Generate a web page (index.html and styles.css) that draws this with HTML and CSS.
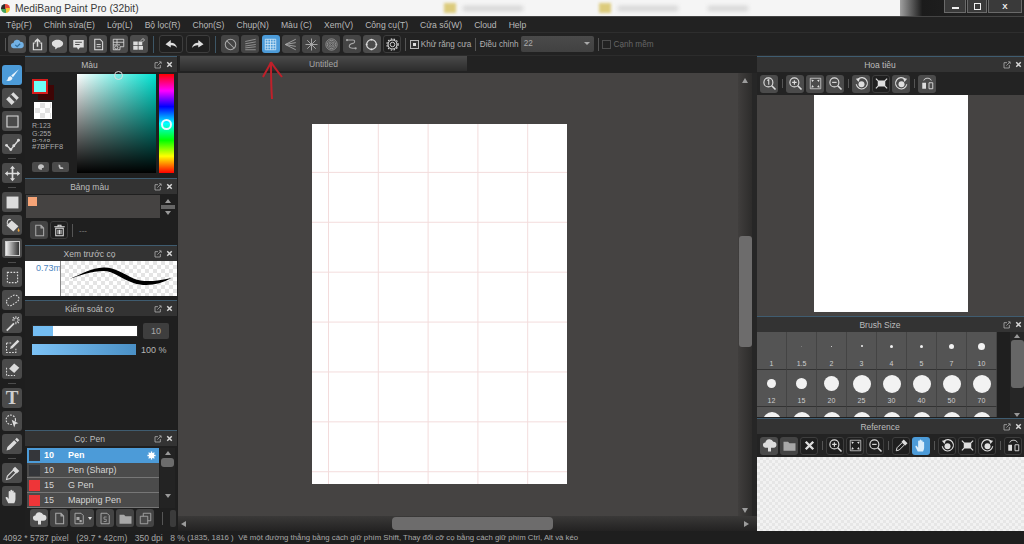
FILE: index.html
```html
<!DOCTYPE html>
<html lang="vi">
<head>
<meta charset="utf-8">
<title>MediBang Paint Pro</title>
<link rel="stylesheet" href="styles.css">
</head>
<body>
<svg class="defs" xmlns="http://www.w3.org/2000/svg">
<defs>
<symbol id="cloud" viewBox="0 0 20 20"><path d="M5 15a3.500 3.500 0 0 1-.5-7A5 5 0 0 1 14 6.500a4.300 4.300 0 0 1 1 8.500z" fill="currentColor"/><path d="M7 10.500l2.500 2.500 4-4" fill="none" stroke="#2f6f9f" stroke-width="1.600"/></symbol>
<symbol id="share" viewBox="0 0 20 20"><path d="M7 8H4.500v9h11V8H13" fill="none" stroke="currentColor" stroke-width="1.500"/><path d="M10 13V3M6.500 6.500L10 3l3.500 3.500" fill="none" stroke="currentColor" stroke-width="2"/></symbol>
<symbol id="bubble" viewBox="0 0 20 20"><path d="M10 3.500c4.500 0 7.500 2.300 7.500 5.200s-3 5.300-7 5.300L7 16.500V13.500C4 12.800 2.500 11 2.500 8.700 2.500 5.800 5.500 3.500 10 3.500z" fill="currentColor"/></symbol>
<symbol id="comment" viewBox="0 0 20 20"><path d="M3 4h14v10h-5l-2.500 3L8 14H3z" fill="currentColor"/><path d="M5.500 7h9M5.500 10h6" stroke="#4a4a4a" stroke-width="1.300"/></symbol>
<symbol id="page" viewBox="0 0 20 20"><path d="M5 3h7l3.500 3.500V17H5z" fill="none" stroke="currentColor" stroke-width="1.400"/><path d="M7.500 10h5.500M7.500 13h5.500" stroke="currentColor" stroke-width="1.200"/></symbol>
<symbol id="blank" viewBox="0 0 20 20"><path d="M5 3h7l3.500 3.500V17H5zM12 3v3.500h3.500" fill="none" stroke="currentColor" stroke-width="1.400"/></symbol>
<symbol id="sheet" viewBox="0 0 20 20"><path d="M3 3h14v10h-5v4H3zM3 7h14M3 10.500h9M8 3v7" fill="none" stroke="currentColor" stroke-width="1.100"/><circle cx="7" cy="14" r="2.200" fill="none" stroke="currentColor"/></symbol>
<symbol id="panes" viewBox="0 0 20 20"><path d="M3 6h6v5H3zM3 12h6v5H3zM10 12h6v5h-6zM10 6h5v5h-5z" fill="currentColor"/><path d="M13 5l3-3 2 2-3 3" fill="none" stroke="currentColor"/></symbol>
<symbol id="undo" viewBox="0 0 20 20"><path d="M9 4L2 9.500 9 14v-3c3.500-.3 6 .7 8.500 3.500C16.500 10 13.500 7.500 9 7.500z" fill="currentColor"/></symbol>
<symbol id="redo" viewBox="0 0 20 20"><path d="M11 4l7 5.500-7 4.500v-3c-3.500-.3-6 .7-8.500 3.500C3.500 10 6.500 7.500 11 7.500z" fill="currentColor"/></symbol>
<symbol id="no" viewBox="0 0 20 20"><circle cx="10" cy="10" r="7" fill="none" stroke="currentColor" stroke-width="1.400"/><path d="M5 5l10 10" stroke="currentColor" stroke-width="1.400"/></symbol>
<symbol id="lines" viewBox="0 0 20 20"><path d="M3 6l14-3M3 9l14-2.500M3 12l14-2M3 14.500l14-1.500M3 17h14" stroke="currentColor" fill="none"/></symbol>
<symbol id="grid" viewBox="0 0 20 20"><path d="M3 3h14v14H3zM3 6.500h14M3 10h14M3 13.500h14M6.500 3v14M10 3v14M13.500 3v14" stroke="currentColor" fill="none"/></symbol>
<symbol id="persp" viewBox="0 0 20 20"><path d="M3 10l14-7M3 10l14-2.500M3 10l14 2.500M3 10l14 7" stroke="currentColor" stroke-width="1.200" fill="none"/></symbol>
<symbol id="radial" viewBox="0 0 20 20"><path d="M10 2v16M2 10h16M4.300 4.300l11.400 11.400M15.700 4.300L4.300 15.700" stroke="currentColor" stroke-width="1.300"/></symbol>
<symbol id="gearsolid" viewBox="0 0 20 20"><path d="M10 1v18M1 10h18M3.600 3.600l12.800 12.800M16.400 3.600L3.600 16.400" stroke="currentColor" stroke-width="3"/><circle cx="10" cy="10" r="6" fill="currentColor"/></symbol>
<symbol id="rings" viewBox="0 0 20 20"><g fill="none" stroke="currentColor"><circle cx="10" cy="10" r="7.500"/><circle cx="10" cy="10" r="5.500"/><circle cx="10" cy="10" r="3.500"/><circle cx="10" cy="10" r="1.500"/></g></symbol>
<symbol id="curve" viewBox="0 0 20 20"><path d="M4 4h8c3 0 3 4 0 4.500S7 10 7 12.500 11 15 15 15" fill="none" stroke="currentColor" stroke-width="1.400"/><circle cx="4" cy="4" r="1.500" fill="currentColor"/><circle cx="15.500" cy="15" r="1.500" fill="currentColor"/></symbol>
<symbol id="circle" viewBox="0 0 20 20"><circle cx="10" cy="10" r="6.500" fill="none" stroke="currentColor" stroke-width="1.500"/><g fill="currentColor"><circle cx="10" cy="3.500" r="1.300"/><circle cx="10" cy="16.500" r="1.300"/><circle cx="3.500" cy="10" r="1.300"/><circle cx="16.500" cy="10" r="1.300"/></g></symbol>
<symbol id="gear" viewBox="0 0 20 20"><circle cx="10" cy="10" r="3" fill="none" stroke="currentColor" stroke-width="1.200"/><circle cx="10" cy="10" r="6" fill="none" stroke="currentColor" stroke-width="1.500"/><circle cx="10" cy="10" r="7.500" fill="none" stroke="currentColor" stroke-width="1.400" stroke-dasharray="2 2"/></symbol>
<symbol id="brush" viewBox="0 0 20 20"><path d="M17.500 2.500L8.500 10l2 2z" fill="currentColor"/><path d="M8 11c-2.500 0-3 1.500-3.500 3-.3 1-1 1.500-2 2 3 .8 7 .5 7.500-3z" fill="currentColor"/></symbol>
<symbol id="eraser" viewBox="0 0 20 20"><path d="M2.500 11L11 2.500l6.500 6.500L9 17.500z" fill="currentColor"/><path d="M6 7.500L12.500 14l2.300-2.300L8.300 5.200z" fill="#4a4a4a"/></symbol>
<symbol id="rect" viewBox="0 0 20 20"><path d="M3.500 3.500h13v13h-13z" fill="none" stroke="currentColor" stroke-width="1.300"/></symbol>
<symbol id="polyline" viewBox="0 0 20 20"><path d="M3 11l5 5 9-11" fill="none" stroke="currentColor" stroke-width="1.600"/><circle cx="3" cy="11" r="1.700" fill="currentColor"/><circle cx="8" cy="16" r="1.700" fill="currentColor"/><circle cx="11.500" cy="11.500" r="1.700" fill="currentColor"/><circle cx="17" cy="5" r="1.700" fill="currentColor"/></symbol>
<symbol id="move" viewBox="0 0 20 20"><path d="M10 1l3 3.500h-2V9h4.500V7l3.500 3-3.500 3v-2H11v4.500h2L10 19l-3-3.500h2V11H4.500v2L1 10l3.500-3v2H9V4.500H7z" fill="currentColor"/></symbol>
<symbol id="solid" viewBox="0 0 20 20"><path d="M3 3h14v14H3z" fill="currentColor"/></symbol>
<symbol id="bucket" viewBox="0 0 20 20"><path d="M3 10l6-6 8 7-6 6z" fill="currentColor"/><path d="M4 9C3 5 5 2 8 3" fill="none" stroke="currentColor" stroke-width="1.300"/><path d="M17 13c1 2 2 3 1 4s-2 0-2-1 .5-2 1-3z" fill="#e9a23b"/></symbol>
<symbol id="select" viewBox="0 0 20 20"><path d="M4 4h12v12H4z" fill="none" stroke="currentColor" stroke-width="1.300" stroke-dasharray="2 1.600"/></symbol>
<symbol id="lasso" viewBox="0 0 20 20"><path d="M3 11c0-3 4-4 6-6s6-2 8 1-1 5-4 7-5 4-7 3-3-2-3-5z" fill="none" stroke="currentColor" stroke-width="1.200" stroke-dasharray="2 1.500"/></symbol>
<symbol id="wand" viewBox="0 0 20 20"><path d="M2.500 17.500L11 9l1.500 1.500L4 19z" fill="currentColor"/><path d="M14 1.500v3M14 8v3M9.500 6h3M15.500 6h3M10.500 2.500l2 2M17.500 2.500l-2 2M17.500 9.500l-2-2" stroke="currentColor" stroke-width="1.200"/></symbol>
<symbol id="selpen" viewBox="0 0 20 20"><path d="M3 6h6M3 6v11h11v-6" fill="none" stroke="currentColor" stroke-width="1.200" stroke-dasharray="2 1.500"/><path d="M7 13l1-3 8-8 2 2-8 8z" fill="currentColor"/></symbol>
<symbol id="selerase" viewBox="0 0 20 20"><path d="M3 8v9h10" fill="none" stroke="currentColor" stroke-width="1.200" stroke-dasharray="2 1.500"/><path d="M6 9l6-6 6 5-6 6z" fill="currentColor"/></symbol>
<symbol id="selarrow" viewBox="0 0 20 20"><circle cx="8" cy="8" r="5.500" fill="none" stroke="currentColor" stroke-width="1.300" stroke-dasharray="2 1.500"/><path d="M9 8l8 4-3.500 1L12 17z" fill="currentColor"/></symbol>
<symbol id="pen" viewBox="0 0 20 20"><path d="M3 17l1-4 8-8 3 3-8 8zM13 4l2-2 3 3-2 2z" fill="currentColor"/></symbol>
<symbol id="picker" viewBox="0 0 20 20"><path d="M3 17l1-4 7-7 3 3-7 7z" fill="none" stroke="currentColor" stroke-width="1.300"/><path d="M10 5l3-3 5 5-3 3z" fill="currentColor"/></symbol>
<symbol id="hand" viewBox="0 0 20 20"><path d="M5 18l-3-6c-.5-1.500 1-2 2-1l1.500 2V4.500c0-1.400 2-1.400 2 0V9V3c0-1.400 2-1.400 2 0v6V4c0-1.400 2-1.400 2 0v6V6c0-1.400 2-1.400 2 0v7c0 2-1 4-1.500 5z" fill="currentColor"/></symbol>
<symbol id="palette" viewBox="0 0 20 20"><path d="M10 3c4.500 0 7.500 3 7.500 6.500 0 3-2.500 3-4 2.800-1.500 0-1.500 1.500-1 2.500.5 1.500-1 2.200-2.500 2.200C5.500 17 2.500 14 2.500 10S5.500 3 10 3z" fill="currentColor"/></symbol>
<symbol id="droplet" viewBox="0 0 20 20"><path d="M4 4l4 1 1 5 6 1 1 4H7L4 9z" fill="currentColor"/></symbol>
<symbol id="trash" viewBox="0 0 20 20"><path d="M3 5h14M8 5V3h4v2M5 7h10v10H5zM8 9v6M10 9v6M12 9v6" fill="none" stroke="currentColor" stroke-width="1.400"/></symbol>
<symbol id="upcloud" viewBox="0 0 20 20"><path d="M5 13a3.500 3.500 0 0 1-.5-7A5.500 5.500 0 0 1 15 5a4 4 0 0 1 .5 8H12v5H8v-5z" fill="currentColor"/></symbol>
<symbol id="paste" viewBox="0 0 20 20"><path d="M4 3h8l3 3v11H4z" fill="none" stroke="currentColor" stroke-width="1.300"/><path d="M6 8h4v4H6zM10 12h3v3h-3z" fill="currentColor"/></symbol>
<symbol id="docs" viewBox="0 0 20 20"><path d="M4 3h8l3 3v11H4z" fill="none" stroke="currentColor" stroke-width="1.300"/><path d="M11.500 8H8v3h3v3H7.500" fill="none" stroke="currentColor"/></symbol>
<symbol id="folder" viewBox="0 0 20 20"><path d="M2 5h6l2 2h8v10H2z" fill="currentColor"/></symbol>
<symbol id="copy" viewBox="0 0 20 20"><path d="M7 3h10v10H7z" fill="none" stroke="currentColor" stroke-width="1.200"/><path d="M3 7h10v10H3z" fill="#4a4a4a" stroke="currentColor" stroke-width="1.200"/></symbol>
<symbol id="zoom1" viewBox="0 0 20 20"><circle cx="8.500" cy="8.500" r="6" fill="none" stroke="currentColor" stroke-width="1.500"/><path d="M13 13l5 5" stroke="currentColor" stroke-width="2.200"/><path d="M7 6l2-1.200v7" fill="none" stroke="currentColor" stroke-width="1.400"/></symbol>
<symbol id="zoomin" viewBox="0 0 20 20"><circle cx="8.500" cy="8.500" r="6" fill="none" stroke="currentColor" stroke-width="1.500"/><path d="M13 13l5 5" stroke="currentColor" stroke-width="2.200"/><path d="M5.500 8.500h6M8.500 5.500v6" stroke="currentColor" stroke-width="1.500"/></symbol>
<symbol id="zoomout" viewBox="0 0 20 20"><circle cx="8.500" cy="8.500" r="6" fill="none" stroke="currentColor" stroke-width="1.500"/><path d="M13 13l5 5" stroke="currentColor" stroke-width="2.200"/><path d="M5.500 8.500h6" stroke="currentColor" stroke-width="1.500"/></symbol>
<symbol id="fit" viewBox="0 0 20 20"><path d="M3 3h14v14H3z" fill="none" stroke="currentColor"/><path d="M4.500 4.500l3.500 1-2.500 2.500zM15.500 4.500l-1 3.500L12 5.500zM4.500 15.500l1-3.500 2.500 2.500zM15.500 15.500L12 14.500l2.500-2.500z" fill="currentColor"/></symbol>
<symbol id="frame" viewBox="0 0 20 20"><path d="M5 6h10v8H5z" fill="currentColor"/><path d="M2.500 3.500l3 3M17.500 3.500l-3 3M2.500 16.500l3-3M17.500 16.500l-3-3" stroke="currentColor" stroke-width="1.500"/></symbol>
<symbol id="rotl" viewBox="0 0 20 20"><path d="M5 4.500A7.500 7.500 0 1 1 3 11" fill="none" stroke="currentColor" stroke-width="1.500"/><path d="M2.500 3.500L8 3 6 8z" fill="currentColor"/><circle cx="10" cy="11" r="4" fill="currentColor"/></symbol>
<symbol id="rotr" viewBox="0 0 20 20"><path d="M15 4.500A7.500 7.500 0 1 0 17 11" fill="none" stroke="currentColor" stroke-width="1.500"/><path d="M17.500 3.500L12 3l2 5z" fill="currentColor"/><circle cx="10" cy="11" r="4" fill="currentColor"/></symbol>
<symbol id="flip" viewBox="0 0 20 20"><path d="M3 9h5v8H3z" fill="currentColor"/><path d="M12 9h5v8h-5z" fill="none" stroke="currentColor" stroke-width="1.200"/><path d="M5 6c1-4 9-4 10 0" fill="none" stroke="currentColor" stroke-width="1.300"/></symbol>
<symbol id="cross" viewBox="0 0 20 20"><path d="M5 5l10 10M15 5L5 15" stroke="currentColor" stroke-width="3.200"/></symbol>
<symbol id="pop" viewBox="0 0 12 12"><path d="M6 2.500H1.500v8h8V6" fill="none" stroke="currentColor" stroke-width="1.100"/><path d="M5 7l5.500-5.500M7.500 1.200h3.300v3.300" fill="none" stroke="currentColor" stroke-width="1"/></symbol>
</defs>
</svg>

<div class="app">
  <header class="titlebar">
    <span class="app-logo"></span>
    <span class="app-name">MediBang Paint Pro (32bit)</span>
    <div class="tabs-behind">
      <span class="ghost-folder"></span><span class="ghost-text ghost-b"></span>
      <span class="ghost-folder"></span><span class="ghost-text ghost-c"></span>
      <span class="ghost-text ghost-d"></span>
    </div>
    <div class="win-area">
      <span class="win-btn win-min"><i class="win-min-bar"></i></span>
      <span class="win-btn win-max"><i class="win-max-box"></i></span>
      <span class="win-btn win-close">X</span>
    </div>
  </header>

  <nav class="menubar">
    <span>Tệp(F)</span><span>Chỉnh sửa(E)</span><span>Lớp(L)</span><span>Bộ lọc(R)</span><span>Chọn(S)</span><span>Chụp(N)</span><span>Màu (C)</span><span>Xem(V)</span><span>Công cụ(T)</span><span>Cửa sổ(W)</span><span>Cloud</span><span>Help</span>
  </nav>

  <div class="toolbar">
    <span class="tsep tsep-first"></span>
    <span class="btn btn-cloud"><svg><use href="#cloud"/></svg></span>
    <span class="btn"><svg><use href="#share"/></svg></span>
    <span class="btn"><svg><use href="#bubble"/></svg></span>
    <span class="btn"><svg><use href="#comment"/></svg></span>
    <span class="btn"><svg><use href="#page"/></svg></span>
    <span class="btn"><svg><use href="#sheet"/></svg></span>
    <span class="btn"><svg><use href="#panes"/></svg></span>
    <span class="tsep tsep-blue"></span>
    <span class="btn btn-wide btn-dark"><svg><use href="#undo"/></svg></span>
    <span class="btn btn-wide btn-dark"><svg><use href="#redo"/></svg></span>
    <span class="tsep tsep-blue"></span>
    <span class="btn btn-dim"><svg><use href="#no"/></svg></span>
    <span class="btn btn-dim"><svg><use href="#lines"/></svg></span>
    <span class="btn btn-on"><svg><use href="#grid"/></svg></span>
    <span class="btn btn-dim"><svg><use href="#persp"/></svg></span>
    <span class="btn btn-dim"><svg><use href="#radial"/></svg></span>
    <span class="btn btn-dim"><svg><use href="#rings"/></svg></span>
    <span class="btn btn-dim"><svg><use href="#curve"/></svg></span>
    <span class="btn"><svg><use href="#circle"/></svg></span>
    <span class="btn btn-dark"><svg><use href="#gear"/></svg></span>
    <span class="tsep"></span>
    <span class="check check-on"></span>
    <span class="tb-label">Khử răng cưa</span>
    <span class="tsep"></span>
    <span class="tb-label">Điều chỉnh</span>
    <span class="combo">22</span>
    <span class="tsep"></span>
    <span class="check"></span>
    <span class="tb-label tb-label-off">Cạnh mềm</span>
  </div>

  <main class="workspace">
    <aside class="tools">
      <span class="tool tool-on"><svg><use href="#brush"/></svg></span>
      <span class="tool"><svg><use href="#eraser"/></svg></span>
      <span class="tool"><svg><use href="#rect"/></svg></span>
      <span class="tool"><svg><use href="#polyline"/></svg></span>
      <span class="tool-sep"></span>
      <span class="tool"><svg><use href="#move"/></svg></span>
      <span class="tool-sep"></span>
      <span class="tool"><svg><use href="#solid"/></svg></span>
      <span class="tool"><svg><use href="#bucket"/></svg></span>
      <span class="tool"><i class="tool-gradient"></i></span>
      <span class="tool-sep"></span>
      <span class="tool"><svg><use href="#select"/></svg></span>
      <span class="tool"><svg><use href="#lasso"/></svg></span>
      <span class="tool"><svg><use href="#wand"/></svg></span>
      <span class="tool"><svg><use href="#selpen"/></svg></span>
      <span class="tool"><svg><use href="#selerase"/></svg></span>
      <span class="tool-sep"></span>
      <span class="tool tool-text">T</span>
      <span class="tool"><svg><use href="#selarrow"/></svg></span>
      <span class="tool"><svg><use href="#pen"/></svg></span>
      <span class="tool-sep"></span>
      <span class="tool"><svg><use href="#picker"/></svg></span>
      <span class="tool"><svg><use href="#hand"/></svg></span>
    </aside>

    <div class="left-panels">
      <section class="panel panel-color">
        <div class="phead"><span class="ptitle">Màu</span><svg class="pop"><use href="#pop"/></svg><svg class="close"><use href="#cross"/></svg></div>
        <div class="color-body">
          <div class="color-info">
            <div class="swatches"><i class="swatch-back"></i><i class="swatch-front"></i></div>
            <i class="swatch-clear"></i>
            <div class="rgb"><span>R:123</span><span>G:255</span><span class="rgb-cut">B:248</span><span class="rgb-hex">#7BFFF8</span></div>
            <div class="color-btns"><span class="mini"><svg><use href="#palette"/></svg></span><span class="mini"><svg><use href="#droplet"/></svg></span></div>
          </div>
          <div class="sv"><i class="sv-ring"></i></div>
          <div class="hue"><i class="hue-ring"></i></div>
        </div>
      </section>

      <section class="panel panel-palette">
        <div class="phead"><span class="ptitle">Bảng màu</span><svg class="pop"><use href="#pop"/></svg><svg class="close"><use href="#cross"/></svg></div>
        <div class="pal-list"><div class="pal-cells"><i class="pal-chip"></i></div><div class="pal-scroll"><i class="arr-up"></i><i class="pal-thumb"></i><i class="arr-down"></i></div></div>
        <div class="pal-foot"><span class="btn btn-dim"><svg><use href="#blank"/></svg></span><span class="btn btn-dark"><svg><use href="#trash"/></svg></span><span class="tsep"></span><span class="pal-name">---</span></div>
      </section>

      <section class="panel panel-preview">
        <div class="phead"><span class="ptitle">Xem trước cọ</span><svg class="pop"><use href="#pop"/></svg><svg class="close"><use href="#cross"/></svg></div>
        <div class="preview">
          <div class="preview-size">0.73m</div>
          <div class="preview-stroke"><svg viewBox="0 0 115 35"><path d="M8 18C20 13 30 7 42 6.500c10-.5 20 6 30 11 10 4 22 3 38-.5-12 7-26 9-38 5C60 18 52 10 42 10 30 10 20 14 8 18z" fill="#000"/></svg></div>
        </div>
      </section>

      <section class="panel panel-control">
        <div class="phead"><span class="ptitle">Kiểm soát cọ</span><svg class="pop"><use href="#pop"/></svg><svg class="close"><use href="#cross"/></svg></div>
        <div class="ctl-row ctl-row-a"><div class="slider"><i class="slider-fill"></i></div><span class="ctl-input">10</span></div>
        <div class="ctl-row"><div class="slider2"></div><span class="ctl-pct">100 %</span></div>
      </section>

      <section class="panel panel-brush">
        <div class="phead"><span class="ptitle">Cọ: Pen</span><svg class="pop"><use href="#pop"/></svg><svg class="close"><use href="#cross"/></svg></div>
        <div class="brush-main">
          <div class="brush-list">
            <div class="brow brow-on"><i class="chip chip-dark"></i><b class="bsize">10</b><b class="bname">Pen</b><svg class="bgear"><use href="#gearsolid"/></svg></div>
            <div class="brow"><i class="chip chip-dark"></i><span class="bsize">10</span><span class="bname">Pen (Sharp)</span></div>
            <div class="brow"><i class="chip chip-red"></i><span class="bsize">15</span><span class="bname">G Pen</span></div>
            <div class="brow"><i class="chip chip-red"></i><span class="bsize">15</span><span class="bname">Mapping Pen</span></div>
          </div>
          <div class="brush-scroll"><i class="arr-up"></i><i class="brush-thumb"></i><i class="arr-down"></i></div>
        </div>
        <div class="brush-foot">
          <span class="btn"><svg><use href="#upcloud"/></svg></span>
          <span class="btn btn-dim"><svg><use href="#blank"/></svg></span>
          <span class="btn btn-wide btn-dim"><svg><use href="#paste"/></svg><i class="caret"></i></span>
          <span class="btn btn-dim"><svg><use href="#docs"/></svg></span>
          <span class="btn btn-dim"><svg><use href="#folder"/></svg></span>
          <span class="btn btn-dim"><svg><use href="#copy"/></svg></span>
          <span class="tsep foot-sep"></span>
          <span class="foot-stub"></span>
        </div>
      </section>
    </div>

    <div class="center">
      <div class="tabbar"><div class="tab">Untitled</div></div>
      <div class="canvas-row">
        <div class="canvas"><div class="paper"></div></div>
        <div class="vscroll"><i class="v-up"></i><i class="v-thumb"></i><i class="v-down"></i></div>
        <div class="center-gutter"></div>
      </div>
      <div class="hscroll"><i class="h-left"></i><i class="h-thumb"></i><i class="h-right"></i></div>
    </div>

    <div class="right-panels">
      <section class="panel panel-nav">
        <div class="phead"><span class="ptitle">Hoa tiêu</span><svg class="pop"><use href="#pop"/></svg><svg class="close"><use href="#cross"/></svg></div>
        <div class="rbar">
          <span class="btn"><svg><use href="#zoom1"/></svg></span><span class="rsep"></span>
          <span class="btn"><svg><use href="#zoomin"/></svg></span><span class="btn"><svg><use href="#fit"/></svg></span><span class="btn"><svg><use href="#zoomout"/></svg></span><span class="rsep"></span>
          <span class="btn"><svg><use href="#rotl"/></svg></span><span class="btn btn-dark"><svg><use href="#frame"/></svg></span><span class="btn"><svg><use href="#rotr"/></svg></span><span class="rsep"></span>
          <span class="btn"><svg><use href="#flip"/></svg></span>
        </div>
        <div class="nav-view"><div class="nav-paper"></div></div>
      </section>

      <section class="panel panel-size">
        <div class="phead"><span class="ptitle">Brush Size</span><svg class="pop"><use href="#pop"/></svg><svg class="close"><use href="#cross"/></svg></div>
        <div class="size-main">
          <div class="size-grid">
            <div class="cell"><span class="dotbox"></span><span class="clabel">1</span></div>
            <div class="cell"><span class="dotbox"><i class="dot dot-faint" style="width:1px;height:1px"></i></span><span class="clabel">1.5</span></div>
            <div class="cell"><span class="dotbox"><i class="dot" style="width:1px;height:1px"></i></span><span class="clabel">2</span></div>
            <div class="cell"><span class="dotbox"><i class="dot" style="width:2px;height:2px"></i></span><span class="clabel">3</span></div>
            <div class="cell"><span class="dotbox"><i class="dot" style="width:3px;height:3px"></i></span><span class="clabel">4</span></div>
            <div class="cell"><span class="dotbox"><i class="dot" style="width:3px;height:3px"></i></span><span class="clabel">5</span></div>
            <div class="cell"><span class="dotbox"><i class="dot" style="width:5px;height:5px"></i></span><span class="clabel">7</span></div>
            <div class="cell"><span class="dotbox"><i class="dot" style="width:7px;height:7px"></i></span><span class="clabel">10</span></div>
            <div class="cell"><span class="dotbox"><i class="dot" style="width:9px;height:9px"></i></span><span class="clabel">12</span></div>
            <div class="cell"><span class="dotbox"><i class="dot" style="width:11px;height:11px"></i></span><span class="clabel">15</span></div>
            <div class="cell"><span class="dotbox"><i class="dot" style="width:15px;height:15px"></i></span><span class="clabel">20</span></div>
            <div class="cell"><span class="dotbox"><i class="dot" style="width:18px;height:18px"></i></span><span class="clabel">25</span></div>
            <div class="cell"><span class="dotbox"><i class="dot" style="width:18px;height:18px"></i></span><span class="clabel">30</span></div>
            <div class="cell"><span class="dotbox"><i class="dot" style="width:18px;height:18px"></i></span><span class="clabel">40</span></div>
            <div class="cell"><span class="dotbox"><i class="dot" style="width:18px;height:18px"></i></span><span class="clabel">50</span></div>
            <div class="cell"><span class="dotbox"><i class="dot" style="width:18px;height:18px"></i></span><span class="clabel">70</span></div>
            <div class="cell"><span class="dotbox"><i class="dot" style="width:18px;height:18px"></i></span><span class="clabel"></span></div>
            <div class="cell"><span class="dotbox"><i class="dot" style="width:18px;height:18px"></i></span><span class="clabel"></span></div>
            <div class="cell"><span class="dotbox"><i class="dot" style="width:18px;height:18px"></i></span><span class="clabel"></span></div>
            <div class="cell"><span class="dotbox"><i class="dot" style="width:18px;height:18px"></i></span><span class="clabel"></span></div>
            <div class="cell"><span class="dotbox"><i class="dot" style="width:18px;height:18px"></i></span><span class="clabel"></span></div>
            <div class="cell"><span class="dotbox"><i class="dot" style="width:18px;height:18px"></i></span><span class="clabel"></span></div>
            <div class="cell"><span class="dotbox"><i class="dot" style="width:18px;height:18px"></i></span><span class="clabel"></span></div>
            <div class="cell"><span class="dotbox"><i class="dot" style="width:18px;height:18px"></i></span><span class="clabel"></span></div>
          </div>
          <div class="size-scroll"><i class="arr-up"></i><i class="size-thumb"></i><i class="arr-down"></i></div>
        </div>
      </section>

      <section class="panel panel-ref">
        <div class="phead"><span class="ptitle">Reference</span><svg class="pop"><use href="#pop"/></svg><svg class="close"><use href="#cross"/></svg></div>
        <div class="rbar rbar-ref">
          <span class="btn"><svg><use href="#upcloud"/></svg></span><span class="btn btn-dim"><svg><use href="#folder"/></svg></span><span class="btn btn-dark"><svg><use href="#cross"/></svg></span><span class="rsep"></span>
          <span class="btn btn-dark"><svg><use href="#zoomin"/></svg></span><span class="btn btn-dark"><svg><use href="#fit"/></svg></span><span class="btn btn-dark"><svg><use href="#zoomout"/></svg></span><span class="rsep"></span>
          <span class="btn btn-dark"><svg><use href="#picker"/></svg></span><span class="btn btn-on"><svg><use href="#hand"/></svg></span><span class="rsep"></span>
          <span class="btn btn-dark"><svg><use href="#rotl"/></svg></span><span class="btn btn-dark"><svg><use href="#frame"/></svg></span><span class="btn btn-dark"><svg><use href="#rotr"/></svg></span><span class="rsep"></span>
          <span class="btn btn-dark"><svg><use href="#flip"/></svg></span>
        </div>
        <div class="ref-view"></div>
      </section>
    </div>
  </main>

  <footer class="status">
    <span>4092 * 5787 pixel</span><span>(29.7 * 42cm)</span><span>350 dpi</span><span>8 %</span><span class="status-coord">(1835, 1816 )</span><span class="status-hint">Vẽ một đường thẳng bằng cách giữ phím Shift, Thay đổi cỡ cọ bằng cách giữ phím Ctrl, Alt và kéo</span>
  </footer>

  <svg class="annotation" viewBox="0 0 24 44"><path d="M10 2C10 14 10 26 11 39M10 2C8 7 5 11 2 17M10 2c3 5 7 10 11 15" fill="none" stroke="#c0202a" stroke-width="2"/></svg>
</div>
</body>
</html>
```

FILE: styles.css
```css
* { box-sizing: border-box; }
html, body { margin: 0; height: 100%; overflow: hidden; }
body { font-family: "Liberation Sans", Arial, sans-serif; background: #1f1f1f; color: #c4c4c4; }
.defs { position: absolute; width: 0; height: 0; }
i { display: block; }
svg { display: block; }

.app { position: relative; width: 1024px; height: 544px; display: flex; flex-direction: column; overflow: hidden; }

/* title bar */
.titlebar { height: 16px; flex: none; display: flex; align-items: center; background: #f5f5f5; color: #3a3a3a; font-size: 10.300px; }
.app-logo { width: 9px; height: 9px; margin-left: 1px; border-radius: 50%; background: conic-gradient(#e5493a 0 25%, #f2c230 25% 50%, #46a35a 50% 75%, #2b2b2b 75%); }
.app-name { margin-left: 5px; white-space: nowrap; }
.tabs-behind { flex: 1; display: flex; align-items: center; padding-left: 305px; }
.ghost-text { height: 5px; background: #d4d4d4; filter: blur(2px); }
.ghost-b { width: 60px; margin-left: 7px; margin-right: 76px; }
.ghost-c { width: 60px; margin-left: 7px; margin-right: 30px; }
.ghost-d { width: 40px; }
.ghost-folder { width: 12px; height: 10px; flex: none; background: #dccb7c; filter: blur(1.500px); }
.win-area { width: 124px; height: 16px; flex: none; display: flex; justify-content: flex-end; gap: 1px; padding-right: 2px; background: linear-gradient(90deg, #a0a0a0 0, #1b1b1b 18%, #262626 100%); }
.win-btn { height: 13px; display: flex; align-items: center; justify-content: center; background: #3a3a3a; border: 1px solid #6a6a6a; border-top: 0; color: #f0f0f0; font-size: 8px; font-weight: 700; }
.win-min { width: 22px; }
.win-max { width: 20px; }
.win-close { width: 34px; }
.win-min-bar { width: 7px; height: 2px; margin-top: 4px; background: #f0f0f0; }
.win-max-box { width: 7px; height: 7px; border: 1px solid #f0f0f0; }

/* menu */
.menubar { height: 17px; flex: none; display: flex; align-items: center; gap: 12px; padding-left: 6px; background: #222; border-top: 1px solid #444; border-bottom: 1px solid #2e2e2e; font-size: 8.600px; color: #b9b9b9; white-space: nowrap; }

/* main toolbar */
.toolbar { height: 23px; flex: none; display: flex; align-items: center; gap: 2.250px; padding-left: 5px; background: #222; border-bottom: 1px solid #2c2c2c; font-size: 8.200px; color: #b0b0b0; }
.btn { width: 18px; height: 18px; flex: none; display: flex; align-items: center; justify-content: center; border-radius: 3px; background: #4b4b4b; color: #dedede; }
.btn svg { width: 15px; height: 15px; }
.btn-wide { width: 24px; }
.btn-dark { background: #1f1f1f; border: 1px solid #3d3d3d; }
.btn-dim { background: #444; color: #a8a8a8; }
.btn-on { background: #4c9bd8; color: #d8ecfa; }
.btn-cloud { background: #4a4a4a; color: #72b2e6; }
.caret { width: 0; height: 0; margin-left: 1px; border: 2.500px solid transparent; border-bottom: 0; border-top: 3px solid #dedede; }
.tsep { width: 1px; height: 13px; flex: none; margin: 0 1.500px; background: #555; }
.tsep-first { margin: 0; }
.tsep-blue { height: 17px; margin: 0 3px; background: #3d5666; }
.check { width: 9px; height: 9px; flex: none; border: 1px solid #4d4d4d; }
.check-on { border-color: #bbb; background: radial-gradient(#ddd 0 35%, #333 36%); }
.tb-label { white-space: nowrap; }
.tb-label-off { color: #666; }
.combo { width: 73px; height: 16px; flex: none; padding-left: 3px; line-height: 16px; background: linear-gradient(#4a4a4a, #414141); border-radius: 2px; color: #aaa; position: relative; }
.combo::after { content: ""; position: absolute; right: 4px; top: 6px; border: 3px solid transparent; border-top: 3px solid #aaa; }

/* workspace */
.workspace { flex: 1; min-height: 0; display: flex; background: #1e1e1e; }
.tools { width: 25px; flex: none; display: flex; flex-direction: column; align-items: center; gap: 3px; padding: 9px 1px 0 0; }
.tool { width: 20px; height: 20px; flex: none; display: flex; align-items: center; justify-content: center; border-radius: 3px; background: #4a4a4a; color: #dcdcdc; }
.tool svg { width: 17px; height: 17px; }
.tool-on { background: #4c9bd8; color: #eaf5fd; }
.tool-sep { width: 8px; height: 1px; flex: none; margin: 1px 0; background: #4c4c4c; }
.tool-gradient { width: 15px; height: 15px; border: 1px solid #ccc; background: linear-gradient(90deg, #eee, #333); }
.tool-text { font-family: "Liberation Serif", serif; font-weight: 700; font-size: 19px; color: #cfcfcf; }

.left-panels { width: 152px; flex: none; display: flex; flex-direction: column; }
.panel { border-top: 1px solid #3f5c70; background: #1f1f1f; }
.phead { height: 15px; display: flex; align-items: center; padding-right: 3px; background: #333; font-size: 8.500px; color: #bdbdbd; }
.right-panels .phead { padding-right: 1px; }
.ptitle { flex: 1; text-align: center; white-space: nowrap; }
.pop { width: 8px; height: 8px; color: #bbb; margin-right: 3px; }
.close { width: 9px; height: 9px; color: #d8d8d8; }

/* colour */
.panel-color { height: 122px; }
.color-body { height: 105px; display: flex; padding-top: 2px; }
.color-info { width: 52px; flex: none; padding: 5px 0 0 7px; }
.swatches { position: relative; height: 22px; }
.swatch-back { position: absolute; left: 6px; top: 6px; width: 16px; height: 15px; background: #3f0505; }
.swatch-front { position: absolute; left: 0; top: 0; width: 16px; height: 15px; background: #6ffff8; border: 2px solid #d81d1d; }
.swatch-clear { width: 18px; height: 17px; margin: 1px 0 0 2px; border: 1px solid #fff; background: repeating-conic-gradient(#e2e2e2 0 25%, #fff 0 50%) 0 0 / 10px 10px; }
.rgb { display: flex; flex-direction: column; font-size: 7px; line-height: 8px; color: #a9a9a9; margin-top: 3px; }
.rgb-cut { height: 4px; overflow: hidden; }
.rgb-hex { margin-top: 1px; font-size: 7.500px; }
.color-btns { display: flex; gap: 3px; margin-top: 11px; }
.mini { width: 17px; height: 10px; display: flex; align-items: center; justify-content: center; background: #4a4a4a; border-radius: 2px; color: #c4c4c4; }
.mini svg { width: 8px; height: 8px; }
.sv { position: relative; width: 79px; height: 99px; flex: none; background: linear-gradient(rgba(0,0,0,0), #000), linear-gradient(90deg, #fff, #00e3d2); }
.sv-ring { position: absolute; left: 37px; top: -3px; width: 9px; height: 9px; border: 1px solid #ddd; border-radius: 50%; }
.hue { position: relative; width: 15px; height: 99px; flex: none; margin-left: 3px; background: linear-gradient(#f00 0, #f0f 17%, #00f 33%, #0ff 50%, #0f0 67%, #ff0 83%, #f00 100%); }
.hue-ring { position: absolute; left: 2px; top: 45px; width: 11px; height: 11px; border: 2px solid #eaf6ff; border-radius: 50%; }

/* palette */
.panel-palette { height: 67px; }
.pal-list { height: 24px; display: flex; padding: 1px 1px 0 1px; }
.pal-cells { flex: 1; background: #454342; padding: 2px 0 0 2px; }
.pal-chip { width: 9px; height: 9px; background: #f6a477; }
.pal-scroll { width: 16px; display: flex; flex-direction: column; align-items: center; justify-content: center; gap: 2px; }
.pal-thumb { width: 14px; height: 4px; background: #666; }
.arr-up { width: 0; height: 0; flex: none; border: 3px solid transparent; border-top: 0; border-bottom: 4px solid #999; }
.arr-down { width: 0; height: 0; flex: none; border: 3px solid transparent; border-bottom: 0; border-top: 4px solid #999; }
.pal-foot { display: flex; align-items: center; gap: 2px; padding: 3px 0 0 5px; color: #999; font-size: 8px; }
.pal-name { color: #888; margin-left: 3px; }

/* preview */
.panel-preview { height: 55px; }
.preview { height: 35px; display: flex; }
.preview-size { width: 36px; flex: none; background: #fff; color: #4c85c0; font-size: 9px; padding: 2px 0 0 11px; overflow: hidden; white-space: nowrap; border-right: 1px solid #888; }
.preview-stroke { flex: 1; background: repeating-conic-gradient(#e4e4e4 0 25%, #fff 0 50%) 0 0 / 8px 8px; }
.preview-stroke svg { width: 100%; height: 100%; }

/* control */
.panel-control { flex: 1; min-height: 0; }
.ctl-row { display: flex; align-items: center; padding-left: 7px; }
.ctl-row-a { margin: 7px 0 5px; }
.slider { width: 106px; height: 12px; background: #fff; border: 1px solid #2a2a2a; }
.slider-fill { width: 20px; height: 100%; background: #74bdf2; }
.ctl-input { width: 26px; height: 16px; margin-left: 5px; line-height: 16px; text-align: center; background: #3e3e3e; color: #a8a8a8; font-size: 9px; border-radius: 2px; }
.slider2 { width: 104px; height: 11px; background: linear-gradient(90deg, #7cc2f5, #4a90c6); }
.ctl-pct { margin-left: 5px; font-size: 9px; color: #b5b5b5; }

/* brush list */
.panel-brush { height: 101px; flex: none; }
.brush-main { display: flex; height: 62px; padding: 2px 0 0 2px; }
.brush-list { width: 132px; flex: none; }
.brow { height: 15px; display: flex; align-items: center; background: #4b4b4b; border-bottom: 1px solid #777; font-size: 9px; color: #d4d4d4; }
.brow-on { background: #4c9bd8; color: #fff; border-bottom-color: #4c9bd8; }
.chip { width: 11px; height: 11px; margin-left: 2px; }
.chip-dark { background: #34363a; }
.chip-red { background: #ee3538; }
.bsize { width: 14px; margin-left: 4px; }
.bname { margin-left: 10px; flex: 1; white-space: nowrap; }
.bgear { width: 9px; height: 9px; margin-right: 3px; color: #fff; }
.brush-scroll { width: 15px; margin-left: 1px; display: flex; flex-direction: column; align-items: center; gap: 3px; padding-top: 3px; background: #232323; }
.brush-thumb { width: 13px; height: 9px; flex: none; background: #6c6c6c; border-radius: 3px; margin-bottom: 24px; }
.brush-foot { display: flex; align-items: center; gap: 2px; padding: 1px 0 0 5px; }
.foot-sep { margin: 0 0 0 6px; }
.foot-stub { width: 6px; height: 17px; margin-left: 5px; background: #3b3b3b; border-radius: 2px; }

/* centre */
.center { flex: 1; min-width: 0; display: flex; flex-direction: column; margin-left: 1px; }
.tabbar { height: 17px; flex: none; padding-left: 2px; background: #222; }
.tab { width: 287px; height: 15px; line-height: 17px; text-align: center; font-size: 8.500px; color: #a5a5a5; background: linear-gradient(#4a4a4a, #2c2c2c); }
.canvas-row { flex: 1; min-height: 0; display: flex; }
.canvas { flex: 1; padding: 51px 0 0 134px; background: #454342; }
.paper { width: 255px; height: 360px; background-color: #fff;
  background-image: linear-gradient(90deg, #f3dcdc 1px, transparent 1px), linear-gradient(#f3dcdc 1px, transparent 1px);
  background-size: 49.800px 49.900px; background-position: 16px -2px; }
.vscroll { width: 14px; flex: none; display: flex; flex-direction: column; align-items: center; background: linear-gradient(90deg, #403e3d, #2d2c2b); position: relative; }
.v-up { width: 0; height: 0; margin-top: 5px; border: 3px solid transparent; border-top: 0; border-bottom: 5px solid #9c9c9c; }
.v-thumb { width: 13px; height: 111px; margin-top: 153px; background: #6d6c6c; border-radius: 3px; }
.v-down { width: 0; height: 0; margin-top: auto; margin-bottom: 3px; border: 3px solid transparent; border-bottom: 0; border-top: 5px solid #9c9c9c; }
.center-gutter { width: 5px; flex: none; background: #262626; }
.hscroll { height: 15px; flex: none; display: flex; align-items: center; padding: 0 8px 0 3px; background: linear-gradient(#3a3938, #232222); }
.h-left { width: 0; height: 0; border: 3px solid transparent; border-left: 0; border-right: 5px solid #9c9c9c; }
.h-thumb { width: 161px; height: 13px; margin-left: 206px; background: #6d6c6c; border-radius: 4px; }
.h-right { width: 0; height: 0; margin-left: auto; border: 3px solid transparent; border-right: 0; border-left: 5px solid #9c9c9c; }

/* right */
.right-panels { width: 267px; flex: none; display: flex; flex-direction: column; }
.rbar { height: 23px; display: flex; align-items: center; gap: 2px; padding-left: 3px; background: #232323; }
.rsep { width: 1px; height: 9px; flex: none; margin: 0 1.500px; background: #555; }
.panel-nav { height: 260px; flex: none; }
.nav-view { height: 221px; display: flex; justify-content: center; background: #454342; padding-bottom: 4px; }
.nav-paper { width: 154px; background: #fff; }
.panel-size { height: 102px; flex: none; }
.size-main { height: 85px; display: flex; }
.size-grid { width: 240px; flex: none; height: 85px; overflow: hidden; display: grid; grid-template-columns: repeat(8, 30px); grid-auto-rows: 37.500px; background: #2c2c2c; }
.cell { display: flex; flex-direction: column; align-items: center; background: #545454; border-right: 1px solid #444; border-bottom: 1px solid #333; }
.dotbox { flex: 1; display: flex; align-items: center; justify-content: center; padding-top: 2px; }
.dot { border-radius: 50%; background: #f2f2f2; }
.dot-faint { background: #888; }
.clabel { height: 10px; flex: none; line-height: 9px; font-size: 7px; color: #cfcfcf; }
.size-scroll { width: 14px; margin-left: 13px; flex: none; display: flex; flex-direction: column; align-items: center; background: #262626; padding-top: 2px; }
.size-thumb { width: 13px; height: 48px; margin: 2px 0 auto; background: #666; border-radius: 3px; }
.panel-ref { flex: 1; min-height: 0; }
.ref-view { height: 74px; background: repeating-conic-gradient(#e6e6e6 0 25%, #f2f2f2 0 50%) 0 0 / 6px 6px; }

/* status */
.status { height: 13px; flex: none; display: flex; align-items: center; gap: 7.500px; padding-left: 3px; background: #1e1e1e; font-size: 8.500px; color: #a8a8a8; white-space: nowrap; }
.status-coord { font-size: 7.800px; margin-left: -5px; }
.status-hint { font-size: 7.800px; margin-left: -3px; }

.annotation { position: absolute; left: 261px; top: 60px; width: 24px; height: 44px; }
```
